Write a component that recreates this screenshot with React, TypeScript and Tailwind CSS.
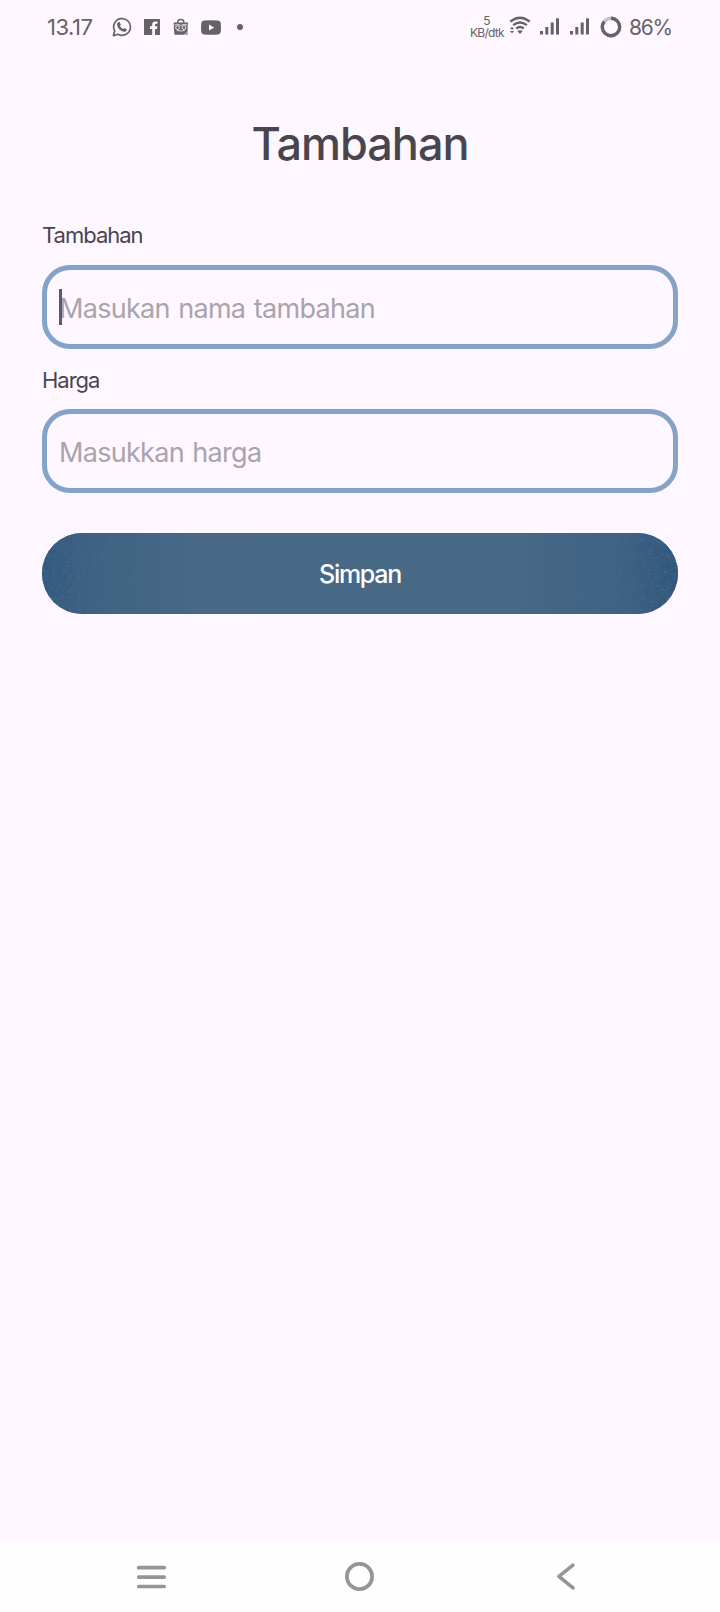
import React from "react";

function Signal() {
  return (
    <svg width="20" height="17" viewBox="0 0 20 17" fill="#656268">
      <rect x="0" y="13" width="3" height="3.5" />
      <rect x="5.3" y="9" width="3" height="7.5" />
      <rect x="10.7" y="4.5" width="3" height="12" />
      <rect x="16" y="0.3" width="3" height="16.2" />
    </svg>
  );
}

function StatusBar() {
  return (
    <header className="flex h-[54px] items-center pl-[47px] pr-12 text-[#656268]">
      <span className="w-[65px] text-[22px] leading-none tracking-[-0.5px] whitespace-nowrap">13.17</span>
      <svg className="shrink-0" width="20" height="20" viewBox="0 0 20 20">
        <path d="M1.4 18.6 2.7 14A8.4 8.4 0 1 1 6 17.3Z" fill="none" stroke="#656268" strokeWidth="1.7" strokeLinejoin="round" />
        <path d="M6.5 5.1 7.6 5 8.9 7.8 8 9.1C8.7 10.5 9.7 11.4 11.1 12L12.2 10.9 14.8 12.2C14.8 14 13.4 14.9 12 14.8 8.4 14 5.8 11.3 5.1 7.9 5 6.6 5.6 5.6 6.5 5.1Z" fill="#656268" />
      </svg>
      <svg className="ml-3 shrink-0" width="16" height="16" viewBox="0 0 16 16">
        <path d="M0 0H16V16H11V10H13L13.4 7.3H11V5.8Q11 4.7 12.2 4.7H13.5V2.4H11.6Q8.2 2.4 8.2 5.6V7.3H6V10H8.2V16H0Z" fill="#656268" />
      </svg>
      <svg className="ml-[13px] shrink-0" width="16" height="18" viewBox="0 0 16 18">
        <path d="M4.8 5V3.8Q4.8 1.5 7.8 1.5T10.8 3.8V5" fill="none" stroke="#656268" strokeWidth="1.4" />
        <path d="M.6 4.4H15L14.4 13.2 11 16.8H1.4Z" fill="#656268" />
        <path d="M11.3 16.8 14.8 13.1 14.5 16.8Z" fill="#88858b" />
        <path d="M1.3 7.3Q3.6 5.8 5.5 6.5L7.8 7.6 10.1 6.5Q12 5.8 14.3 7.3" fill="none" stroke="#fef7ff" strokeWidth=".8" />
        <circle cx="4.6" cy="9.6" r="1.9" fill="none" stroke="#fef7ff" strokeWidth=".9" />
        <circle cx="11" cy="9.6" r="1.9" fill="none" stroke="#fef7ff" strokeWidth=".9" />
        <path d="M3.8 12.4 7.8 13 11.8 12.4" fill="none" stroke="#fef7ff" strokeWidth=".8" />
      </svg>
      <svg className="ml-3 shrink-0" width="20" height="15" viewBox="0 0 20 15">
        <path d="M3 .5Q10 0 17 .5Q19.4.8 19.7 3Q20.2 7.5 19.7 12Q19.4 14.2 17 14.5Q10 15 3 14.5Q.6 14.2.3 12Q-.2 7.5.3 3Q.6.8 3 .5Z" fill="#656268" />
        <path d="M8 4.5V10.5L13.2 7.5Z" fill="#fef7ff" />
      </svg>
      <span className="ml-4 h-1.5 w-1.5 shrink-0 rounded-full bg-[#656268]" />
      <div className="ml-auto flex items-center">
        <div className="w-[34px] text-center text-[12px] leading-[12px] whitespace-nowrap">
          <div>5</div>
          <div className="text-left tracking-[-0.75px]">KB/dtk</div>
        </div>
        <svg className="ml-[5px] mb-1 shrink-0" width="22" height="19" viewBox="0 0 22 19">
          <g fill="none" stroke="#656268" strokeWidth="2.3">
            <path d="M1.2 5.7Q11 -2.2 20.8 5.7" />
            <path d="M4.2 9.2Q11 3.7 17.8 9.2" />
            <path d="M7.3 12.6Q11 9.5 14.8 12.6" />
          </g>
          <path d="M8.3 15.1Q11 13.2 13.7 15.1L11 18Z" fill="#656268" />
          <path d="M.9 13.2 3 10.8 5.1 13.2ZM.9 14.9H5.1L3 17.3Z" fill="#656268" />
        </svg>
        <div className="ml-[9px] mb-0.5"><Signal /></div>
        <div className="ml-2.5 mb-0.5"><Signal /></div>
        <svg className="ml-2.5 shrink-0" width="22" height="22" viewBox="0 0 22 22">
          <circle cx="11" cy="11" r="8.7" fill="none" stroke="#c4bfc7" strokeWidth="3.4" />
          <circle cx="11" cy="11" r="8.7" fill="none" stroke="#656268" strokeWidth="3.4" pathLength="100" strokeDasharray="86 14" transform="rotate(-90 11 11)" />
        </svg>
        <span className="ml-[7px] w-[43px] text-[21px] leading-none tracking-[-1.2px] whitespace-nowrap">86%</span>
      </div>
    </header>
  );
}

function Field({ label, placeholder, focused }: { label: string; placeholder: string; focused?: boolean }) {
  return (
    <div>
      <label className={`block h-[30px] text-[22px] leading-[30px] tracking-[-1px] text-[#49454f] ${focused ? "pt-0" : "pt-px"}`}>{label}</label>
      <div className="relative mt-[15px] flex h-[84px] items-center rounded-[28px] border-5 border-[#83a3c8] pl-3 pt-[3px]">
        {focused && <span className="absolute top-[19px] left-3 h-9 w-[3px] bg-[#5d5870]" />}
        <span className="text-[27px] leading-none tracking-[-0.7px] [word-spacing:1.5px] text-[#a9a4ab]">{placeholder}</span>
      </div>
    </div>
  );
}

const grains = Array.from({ length: 520 }, (_, i) => {
  const a = Math.abs(Math.sin(i * 12.9898 + 1) * 43758.5453) % 1;
  const b = Math.abs(Math.sin(i * 78.233 + 2) * 24634.6345) % 1;
  const d = Math.floor(a * a * 60) * 2;
  return { x: i % 2 ? 634 - d : d, y: Math.floor(b * 40) * 2, w: i % 3 ? 2 : 4 };
});

function SaveButton() {
  return (
    <button className="relative h-[81px] w-full overflow-hidden rounded-full bg-[#486985] text-[25px] font-medium text-white">
      <span className="absolute inset-y-0 left-0 w-[150px] bg-linear-to-r from-[#355b80] via-[#3f6383] via-35% to-[#486985]" />
      <span className="absolute inset-y-0 right-0 w-[160px] bg-linear-to-l from-[#31577e] via-[#3f6384] via-35% to-[#486985]" />
      <svg className="absolute inset-0" width="636" height="81" fill="#4d708b" opacity="0.28">
        {grains.map((g, i) => (
          <rect key={i} x={g.x} y={g.y} width={g.w} height="2" />
        ))}
      </svg>
      <span className="relative top-px tracking-[-1.3px]">Simpan</span>
    </button>
  );
}

function NavBar() {
  return (
    <nav className="mt-auto flex h-[71px] items-start bg-[#fefefe] pl-[136px] pt-5">
      <svg width="31" height="31" viewBox="0 0 31 31" stroke="#959595" strokeWidth="3.7" strokeLinecap="round">
        <path d="M2.7 6.7H28.2M2.7 16.1H28.2M2.7 25.5H28.2" />
      </svg>
      <svg className="ml-[177px]" width="31" height="31" viewBox="0 0 31 31">
        <circle cx="15.5" cy="15.5" r="12.6" fill="none" stroke="#959595" strokeWidth="3.8" />
      </svg>
      <svg className="ml-[181px]" width="20" height="31" viewBox="0 0 20 31">
        <path d="M17 4.2 2.9 15.4 17 26.9" fill="none" stroke="#959595" strokeWidth="3.6" strokeLinecap="round" strokeLinejoin="round" />
      </svg>
    </nav>
  );
}

export default function App() {
  return (
    <div className="flex h-[1612px] w-[720px] flex-col bg-[#fef7ff] font-['Inter',sans-serif]">
      <StatusBar />
      <main className="px-[42px] pt-[60px]">
        <h1 className="text-center text-[45px] leading-[60px] font-[450] tracking-[-1px] text-[#49454f]">Tambahan</h1>
        <form className="pt-[46px]">
          <Field label="Tambahan" placeholder="Masukan nama tambahan" focused />
          <div className="h-[15px]" />
          <Field label="Harga" placeholder="Masukkan harga" />
          <div className="h-10" />
          <SaveButton />
        </form>
      </main>
      <NavBar />
    </div>
  );
}
